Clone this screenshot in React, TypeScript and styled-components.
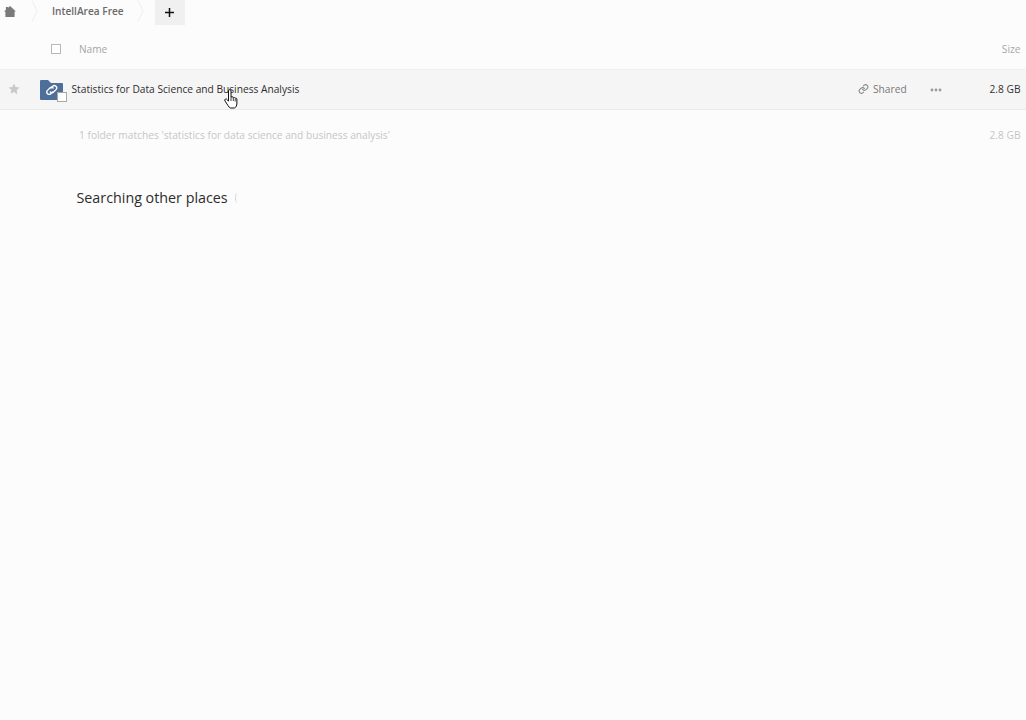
import React from "react";
import styled, { createGlobalStyle } from "styled-components";

const Global = createGlobalStyle`
  html, body { margin: 0; padding: 0; background: #fdfcfc; height: 100%; }
  body { font-family: "Open Sans", "Liberation Sans", sans-serif; overflow: hidden; }
`;
const Page = styled.div`
  width: 1026px; height: 720px; position: relative; background: #fdfcfc; overflow: hidden;
`;
const Breadcrumbs = styled.nav`
  display: flex; align-items: flex-start; height: 25px; padding-left: 3px;
`;
const HomeCrumb = styled.span`
  display: flex; width: 13px; height: 23px; align-items: center; justify-content: center; color: #7a7a7a;
`;
const Chevron = styled.svg`
  width: 7px; height: 22px; flex: none; fill: none; stroke: #eeeded; stroke-width: 1;
`;
const CrumbGap = styled.span<{ $w: number }>`
  width: ${(p) => p.$w}px; flex: none;
`;
const Crumb = styled.span`
  font-size: 10.1px; font-weight: 600; color: #6a6a6a; line-height: 23px; white-space: nowrap;
`;
const AddButton = styled.button`
  width: 30px; height: 25px; margin-left: 11px; border: 0; padding: 0; background: #f1f0f0;
  display: flex; align-items: center; justify-content: center; color: #111;
`;
const HeaderRow = styled.div`
  display: flex; align-items: center; height: 44px; box-sizing: border-box; padding-top: 3px; color: #a5a5a5; font-size: 10.1px;
`;
const CheckCell = styled.div`
  width: 79px; flex: none; padding-left: 51px; box-sizing: border-box; display: flex;
`;
const Checkbox = styled.span`
  width: 8px; height: 8px; border: 1px solid #b8b8b8; background: #fff; display: block;
`;
const Grow = styled.div` flex: 1; `;
const SizeCell = styled.div<{ $tone: string; $size: number }>`
  width: 80px; padding-right: 5.5px; box-sizing: border-box; text-align: right; flex: none;
  color: ${(p) => p.$tone}; font-size: ${(p) => p.$size}px; white-space: nowrap;
`;
const FileRow = styled.div`
  display: flex; align-items: center; height: 38px; padding-bottom: 1px; box-sizing: content-box; background: #f6f5f5;
  border-top: 1px solid #f2f1f1; border-bottom: 1px solid #ebeaea;
`;
const StarCell = styled.div`
  width: 40px; flex: none; padding-left: 8px; box-sizing: border-box; display: flex; color: #c9c9c9;
`;
const FolderWrap = styled.div`
  width: 32px; height: 24px; flex: none; position: relative; display: flex;
`;
const FolderIcon = styled.svg`
  width: 23px; height: 20px; margin-top: 3px;
`;
const ShareBadge = styled.span`
  position: absolute; left: 17px; top: 15px; width: 8px; height: 8px; background: #fff; border: 1px solid #a8a8a8;
`;
const FileName = styled.div`
  flex: 1; margin-left: -0.5px; font-size: 10.2px; color: #2e2e2e; white-space: nowrap;
`;
const SharedAction = styled.div`
  display: flex; align-items: center; gap: 4px; color: #777; font-size: 10.2px; width: 72px; flex: none;
`;
const MoreAction = styled.div`
  width: 16px; flex: none; display: flex; color: #9a9a9a; padding-top: 1px;
`;
const SummaryRow = styled.div`
  display: flex; align-items: center; height: 50px; color: #c6c6c6; font-size: 10.2px;
`;
const SummaryText = styled.div` flex: 1; padding-left: 79px; white-space: nowrap; `;
const Heading = styled.h2`
  margin: 26px 0 0 76.5px; font-size: 14.3px; font-weight: 400; line-height: 24px; color: #2c2c2c;
  display: flex; align-items: center; gap: 7px;
`;
const Spinner = styled.span`
  width: 4px; height: 10px; border-left: 1px solid #d6d6d6; border-radius: 50%;
`;
const Cursor = styled.svg`
  position: absolute; left: 224px; top: 89px; width: 15px; height: 20px;
`;

const Chev = () => (
  <Chevron viewBox="0 0 7 22"><path d="M1 0.500l5 10.500L1 21.500" /></Chevron>
);

export default function App() {
  return (
    <Page>
      <Global />
      <Breadcrumbs>
        <HomeCrumb>
          <svg width="12" height="11" viewBox="0 0 13 12" fill="currentColor">
            <path d="M6.500 0L13 6H11.500V12H1.500V6H0L2 4.200V1H4.500V2Z" />
          </svg>
        </HomeCrumb>
        <CrumbGap $w={15} />
        <Chev />
        <CrumbGap $w={14} />
        <Crumb>IntellArea Free</Crumb>
        <CrumbGap $w={13} />
        <Chev />
        <AddButton aria-label="New">
          <svg width="11" height="11" viewBox="0 0 11 11" stroke="currentColor" strokeWidth="1.5">
            <path d="M5.500 1v9M1 5.500h9" />
          </svg>
        </AddButton>
      </Breadcrumbs>
      <HeaderRow>
        <CheckCell><Checkbox /></CheckCell>
        <Grow>Name</Grow>
        <SizeCell $tone="#a8a8a8" $size={10.2}>Size</SizeCell>
      </HeaderRow>
      <FileRow>
        <StarCell>
          <svg width="12" height="12" viewBox="0 0 24 24" fill="currentColor">
            <path d="M12 1l3.400 7.200 7.600 1-5.600 5.400 1.400 7.900L12 17.800l-6.800 3.700 1.400-7.900L1 9.200l7.600-1z" />
          </svg>
        </StarCell>
        <FolderWrap>
          <FolderIcon viewBox="0 0 23 20">
            <path d="M0 1Q0 0 1 0H8l3 3h11q1 0 1 1v15q0 1-1 1H1q-1 0-1-1z" fill="#4f6f9b" />
            <g fill="none" stroke="#fff" strokeWidth="1.300" strokeLinecap="round">
              <path d="M11 8l1.700-1.700a2.300 2.300 0 0 1 3.300 3.300l-2.400 2.400a2.300 2.300 0 0 1-3.200 0" />
              <path d="M12.500 12l-1.700 1.700a2.300 2.300 0 0 1-3.300-3.300l2.400-2.400a2.300 2.300 0 0 1 3.200 0" />
            </g>
          </FolderIcon>
          <ShareBadge />
        </FolderWrap>
        <FileName>Statistics for Data Science and Business Analysis</FileName>
        <SharedAction>
          <svg width="11" height="12" viewBox="0 0 24 24" fill="none" stroke="#8a8a8a" strokeWidth="2.400" strokeLinecap="round">
            <path d="M10 13a5 5 0 0 0 7.500.5l3-3a5 5 0 0 0-7-7l-1.700 1.700" />
            <path d="M14 11a5 5 0 0 0-7.500-.5l-3 3a5 5 0 0 0 7 7l1.700-1.700" />
          </svg>
          Shared
        </SharedAction>
        <MoreAction>
          <svg width="12" height="4" viewBox="0 0 12 4" fill="currentColor">
            <circle cx="2" cy="2" r="1.400" /><circle cx="6" cy="2" r="1.400" /><circle cx="10" cy="2" r="1.400" />
          </svg>
        </MoreAction>
        <SizeCell $tone="#333" $size={10.2}>2.8 GB</SizeCell>
      </FileRow>
      <SummaryRow>
        <SummaryText>1 folder matches 'statistics for data science and business analysis'</SummaryText>
        <SizeCell $tone="#c6c6c6" $size={10.2}>2.8 GB</SizeCell>
      </SummaryRow>
      <Heading>Searching other places <Spinner /></Heading>
      <Cursor viewBox="0 0 15 20">
        <path d="M4.500 2q0-1.500 1.300-1.500T7 2v6l1-.3q1.200 0 1.300 1 1.200-.6 1.800.5 1.200-.5 1.800.6V15q0 3-2.500 4H6.500Q5 18.500 4 16.500L1 12q-.7-1.400.4-2 1.100-.4 2 .8l1.100 1.400z" fill="#fff" stroke="#111" strokeWidth="1" strokeLinejoin="round" />
        <path d="M7 8v4M9.300 9v3M11.200 10v2.500" stroke="#111" strokeWidth=".8" fill="none" />
      </Cursor>
    </Page>
  );
}
